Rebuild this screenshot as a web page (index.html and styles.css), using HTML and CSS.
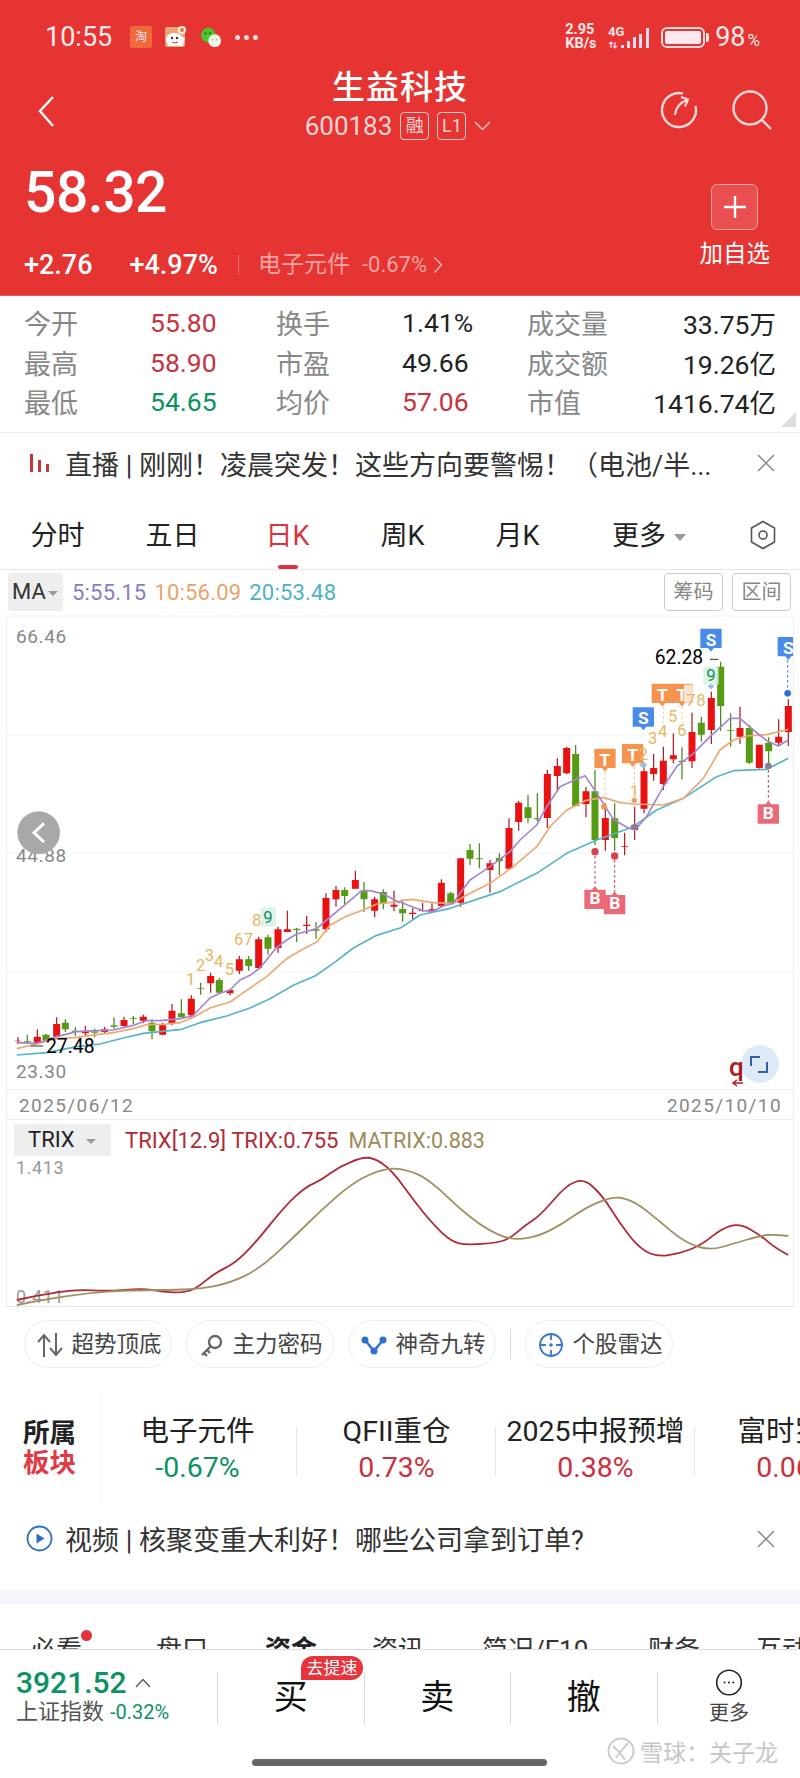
FILE: index.html
```html
<!DOCTYPE html>
<html>
<head>
    <meta charset="utf-8">
    <title>生益科技</title>
    <link rel="stylesheet" href="styles.css">
</head>
<body>
<div class="page">

    <!-- red quote header -->
    <header class="header">
        <div class="statusbar">
            <span class="clock">10:55</span>
            <span class="app-icon app-taobao">淘</span>
            <svg class="app-icon" viewBox="0 0 22 22">
                <rect x="0" y="1" width="20" height="20" rx="2" fill="#e9a77c"/>
                <path d="M1 14c0-5 4-7 8-7s7 2 8 4l3 1-2 8H3z" fill="#fff"/>
                <circle cx="7" cy="12" r="1.2" fill="#333"/><circle cx="12" cy="12" r="1.2" fill="#333"/>
                <path d="M7 16q3 2 6 0" stroke="#c33" fill="none"/>
                <circle cx="17" cy="4" r="4" fill="#f6efe0"/><circle cx="17" cy="4" r="2" fill="#e8772e"/>
            </svg>
            <svg class="app-icon app-wechat" viewBox="0 0 24 22">
                <circle cx="9" cy="9" r="8" fill="#4fc32e"/>
                <circle cx="6" cy="7" r="1.1" fill="#1d6e10"/><circle cx="11" cy="7" r="1.1" fill="#1d6e10"/>
                <circle cx="16" cy="15" r="7" fill="#eef7ea"/>
                <circle cx="14" cy="14" r=".9" fill="#7ab56b"/><circle cx="18" cy="14" r=".9" fill="#7ab56b"/>
            </svg>
            <span class="status-dots"><i></i><i></i><i></i></span>
            <span class="status-right">
                <span class="netspeed">2.95<br>KB/s</span>
                <svg class="signal" width="44" height="24" viewBox="0 0 44 24">
                    <text class="signal-text" x="0" y="11">4G</text>
                    <path d="M3 17v6M1 19l2-2 2 2M7 23v-6M5 21l2 2 2-2" stroke="#fde" fill="none" stroke-width="1.2"/>
                    <path d="M13 20h3v3h-3zM19 16h3v7h-3zM25 12h3v11h-3zM31 9h3v14h-3zM38 3h3v20h-3z" fill="#fde"/>
                </svg>
                <span class="battery"><i></i></span>
                <span class="battery-pct">98<small>%</small></span>
            </span>
        </div>

        <div class="nav">
            <svg class="nav-back" width="18" height="32" viewBox="0 0 18 32"><path d="M16 2 3 16l13 15" fill="none" stroke="#fff" stroke-width="2.4"/></svg>
            <div class="nav-title">
                <div class="stock-name">生益科技</div>
                <div class="stock-code">
                    <span>600183</span>
                    <span class="code-tag">融</span>
                    <span class="code-tag">L1</span>
                    <svg width="17" height="10" viewBox="0 0 17 10"><path d="m1 1 7.500 7.500L16 1" fill="none" stroke="#f8c4c4" stroke-width="1.500"/></svg>
                </div>
            </div>
            <svg class="nav-refresh" width="40" height="40" viewBox="0 0 40 40">
                <path d="M24 3.500A17 17 0 1 0 36.500 16" fill="none" stroke="#fbd6d6" stroke-width="2.400"/>
                <path d="M16 25q1-11 12-15M22 7l7 2.500-3 7" fill="none" stroke="#fbd6d6" stroke-width="2.200"/>
            </svg>
            <svg class="nav-search" width="42" height="42" viewBox="0 0 42 42">
                <circle cx="19" cy="19" r="16.500" fill="none" stroke="#fbd6d6" stroke-width="2.400"/>
                <path d="m31 31 9 9" stroke="#fbd6d6" stroke-width="2.400"/>
            </svg>
        </div>

        <div class="quote">
            <div class="quote-main">
                <div class="price">58.32</div>
                <div class="change">
                    <span>+2.76</span>
                    <span class="change-pct">+4.97%</span>
                    <span class="change-sep"></span>
                    <span class="change-sector">电子元件</span>
                    <span class="change-sector-pct">-0.67%</span>
                    <svg width="10" height="18" viewBox="0 0 10 18"><path d="m1.500 1.500 7 7.500-7 7.500" fill="none" stroke="#fbb" stroke-width="1.300"/></svg>
                </div>
            </div>
            <div class="watch">
                <div class="watch-btn"><svg width="24" height="24" viewBox="0 0 24 24"><path d="M12 1v22M1 12h22" stroke="#fff" stroke-width="2.400"/></svg></div>
                <div class="watch-label">加自选</div>
            </div>
        </div>
    </header>

    <!-- day stats -->
    <section class="stats">
        <span class="stat-label">今开</span><span class="stat-val up">55.80</span>
        <span class="stat-label">换手</span><span class="stat-val">1.41%</span>
        <span class="stat-label">成交量</span><span class="stat-val end">33.75万</span>
        <span class="stat-label">最高</span><span class="stat-val up">58.90</span>
        <span class="stat-label">市盈</span><span class="stat-val">49.66</span>
        <span class="stat-label">成交额</span><span class="stat-val end">19.26亿</span>
        <span class="stat-label">最低</span><span class="stat-val down">54.65</span>
        <span class="stat-label">均价</span><span class="stat-val up">57.06</span>
        <span class="stat-label">市值</span><span class="stat-val end">1416.74亿</span>
        <i class="stats-corner"></i>
    </section>

    <div class="news news-live">
        <svg width="21" height="20" viewBox="0 0 21 20"><path d="M1 1h3v18H1zM9 7h3v12H9zM17 11h3v8h-3z" fill="#c9343f"/></svg>
        <span class="news-text">直播 | 刚刚！凌晨突发！这些方向要警惕！（电池/半...</span>
        <svg class="news-close" width="20" height="20" viewBox="0 0 20 20"><path d="m2 2 16 16M18 2 2 18" stroke="#888" stroke-width="1.500"/></svg>
    </div>

    <nav class="periods">
        <span class="period">分时</span>
        <span class="period">五日</span>
        <span class="period active">日K</span>
        <span class="period">周K</span>
        <span class="period">月K</span>
        <span class="period period-more">更多<i class="caret"></i></span>
        <svg class="period-cog" width="26" height="30" viewBox="0 0 26 30">
            <path d="M13 1.500 24.500 8v14L13 28.500 1.500 22V8z" fill="none" stroke="#555" stroke-width="1.600"/>
            <circle cx="13" cy="15" r="4" fill="none" stroke="#555" stroke-width="1.600"/>
        </svg>
    </nav>

    <div class="ma-row">
        <span class="ind-chip ma-chip">MA<i class="caret"></i></span>
        <span class="ma ma5">5:55.15</span>
        <span class="ma ma10">10:56.09</span>
        <span class="ma ma20">20:53.48</span>
        <span class="ma-btn ma-btn-first">筹码</span>
        <span class="ma-btn">区间</span>
    </div>

    <!-- k line chart + trix -->
    <div class="chart-frame">
        <svg class="kline" width="788" height="474" viewBox="6 615 788 474">
            <defs>
                <path id="tag-down" d="M-30-32H30V22H8L0 32-8 22H-30Z"/>
                <path id="tag-up" d="M-30 32H30V-22H8L0-32-8-22H-30Z"/>
            </defs>
            <path class="grid" d="M6 616H794M6 735H794M6 853H794M6 972H794"/>
            <text class="axis" x="16" y="643">66.46</text>
            <text class="axis" x="16" y="862">44.88</text>
            <text class="axis" x="16" y="1078">23.30</text>

            <!-- first half, x and y in 3x units -->
            <g transform="translate(0 800) scale(.33333)">
                <path class="wick-up" d="M54 712V732M112 688V730M170 652V710M256 678V710M314 680V700M372 650V680M430 644V670M488 668V706M516 612V676M574 586V656M632 518V578M690 566V586M718 468V522M776 410V508M834 380V458M862 332V396M920 348V402M978 280V396M1008 258V320M1066 212V266M1124 290V352M1182 272V334"/>
                <path class="wick-down" d="M82 704V730M138 702V722M196 658V696M226 682V708M284 686V712M342 652V686M400 648V672M456 658V718M544 598V652M602 548V584M658 534V580M746 468V512M804 404V464M890 384V426M948 366V416M1034 262V312M1092 246V336M1150 268V328"/>
                <path class="body-up" d="M54 722V724M112 710V728M170 672V710M256 694V700M314 688V696M372 660V678M430 650V662M488 676V704M516 632V672M574 596V646M632 528V550M690 570V580M718 478V512M776 418V504M834 388V444M862 388V396M920 374V378M978 294V388M1008 270V298M1066 240V266M1124 298V332M1182 314V320"/>
                <path class="body-down" d="M82 724V726M138 704V720M196 668V688M226 692V696M284 694V698M342 676V680M400 654V656M456 668V694M544 640V652M602 564V566M658 540V578M746 478V498M804 412V446M890 386V390M948 388V392M1034 270V288M1092 274V298M1150 276V310"/>
                <polyline class="ma20-line" points="50,765 140,758 230,740 300,732 370,714 430,700 545,688 600,668 680,648 750,624 810,596 880,556 945,528 1000,490 1060,444 1130,406 1200,384"/>
                <polyline class="ma10-line" points="50,746 110,732 170,716 230,712 290,704 340,698 400,686 440,674 500,672 540,668 580,652 630,624 690,606 730,578 800,530 860,476 900,452 950,426 990,376 1040,348 1090,330 1130,312 1200,304"/>
                <polyline class="ma5-line" points="50,728 110,730 170,710 230,695 290,692 340,690 400,676 440,662 480,662 540,656 578,648 630,594 660,580 690,570 720,540 750,526 780,504 830,442 860,420 890,402 950,386 980,360 1040,310 1085,272 1110,272 1150,282 1200,308"/>
                <rect class="nine-bg" x="782" y="322" width="46" height="58"/>
                <text class="num" x="572" y="556">1</text>
                <text class="num" x="602" y="514">2</text>
                <text class="num" x="628" y="482">3</text>
                <text class="num" x="656" y="500">4</text>
                <text class="num" x="688" y="526">5</text>
                <text class="num" x="716" y="436">6</text>
                <text class="num" x="745" y="436">7</text>
                <text class="num" x="770" y="378">8</text>
                <text class="num-nine" x="804" y="368">9</text>
                <path class="low-dash" d="M92 738H130"/>
                <text class="extreme" x="138" y="758">27.48</text>
                <circle class="back-btn" cx="116" cy="98" r="64"/>
                <path class="back-arrow" d="M132 70 102 98l30 28"/>
            </g>

            <!-- second half -->
            <g transform="translate(400 610) scale(.33333)">
                <path class="wick-up" d="M38 895V930M68 878V905M96 880V905M124 808V890M182 745V890M270 750V848M327 625V778M356 572V662M442 480V654M472 445V542M500 410V492M558 530V622M616 580V722M674 668V736M704 590V690M732 466V610M761 432V512M790 410V540M820 370V460M876 308V474M934 245V402M1020 290V402M1078 404V476M1136 328V408M1165 268V408"/>
                <path class="wick-down" d="M8 870V935M152 845V880M210 702V765M238 700V775M298 730V795M384 555V640M412 550V634M527 405V590M585 480V705M644 580V722M846 412V508M904 320V395M962 155V362M992 310V410M1048 345V462M1106 382V470"/>
                <path class="body-up" d="M38 908V912M68 900V903M96 898V905M124 818V888M182 745V878M270 760V780M327 654V776M356 578V636M442 492V624M472 468V498M500 414V490M558 544V582M616 624V690M674 708V710M704 645V660M732 484V596M761 474V492M790 452V522M820 436V448M876 366V454M934 264V360M1020 354V380M1078 404V474M1136 380V398M1165 288V366"/>
                <path class="body-down" d="M8 897V910M152 850V878M210 720V746M238 745V748M298 744V754M384 592V624M412 625V628M527 432V588M585 544V690M644 625V684M846 452V456M904 338V374M962 170V288M992 360V362M1048 354V458M1106 398V424"/>
                <polyline class="ma20-line" points="0,955 60,915 150,895 300,845 410,790 500,730 590,690 700,650 770,600 850,565 950,500 1000,482 1100,478 1165,445"/>
                <polyline class="ma10-line" points="0,872 35,868 100,878 160,880 200,855 270,820 340,770 410,710 450,650 500,600 555,572 610,562 660,578 700,582 790,585 850,565 910,505 960,420 1000,390 1040,378 1100,374 1165,358"/>
                <polyline class="ma5-line" points="0,876 40,892 70,902 100,904 130,888 160,880 180,850 210,810 240,790 270,770 330,725 360,690 410,645 440,590 480,530 510,516 555,497 600,565 640,628 680,652 705,660 740,620 790,530 830,470 880,430 930,380 990,325 1020,325 1060,360 1100,392 1135,408 1165,390"/>

                <path class="dash-red" d="M585 738V828M644 750V845M1105 480V572"/>
                <path class="dash-blue" d="M1163 150V240"/>
                <path class="dash-orange" d="M615 487V578M703 470V560M790 290V340M846 290V340"/>
                <circle class="dot-red" cx="585" cy="725" r="11"/>
                <circle class="dot-red" cx="644" cy="738" r="11"/>
                <circle class="dot-orange" cx="612" cy="590" r="9"/>
                <circle class="dot-orange" cx="703" cy="571" r="8"/>
                <circle class="dot-blue" cx="1163" cy="250" r="10"/>
                <circle class="dot-mauve" cx="1105" cy="468" r="10"/>
                <circle class="dot-mauve" cx="704" cy="650" r="9"/>
                <path class="diamond" d="M730 454l12 11-12 11-12-11z"/>
                <path class="diamond" d="M933 220l10 9-10 9-10-9z"/>

                <g class="tag tag-t" transform="translate(615 450)"><use href="#tag-down"/><text y="17">T</text></g>
                <g class="tag tag-t" transform="translate(698 436)"><use href="#tag-down"/><text y="17">T</text></g>
                <g class="tag tag-t" transform="translate(787 255)"><use href="#tag-down"/><text y="17">T</text></g>
                <g class="tag tag-t" transform="translate(846 255)"><use href="#tag-down"/><text y="17">T</text></g>
                <rect class="t-fade" x="852" y="224" width="26" height="54"/>
                <g class="tag tag-s" transform="translate(730 326)"><use href="#tag-down"/><text y="17">S</text></g>
                <g class="tag tag-s" transform="translate(933 90)"><use href="#tag-down"/><text y="17">S</text></g>
                <g class="tag tag-s" transform="translate(1165 115)"><use href="#tag-down"/><text y="17">S</text></g>
                <g class="tag tag-b" transform="translate(585 863)"><use href="#tag-up"/><text y="19">B</text></g>
                <g class="tag tag-b" transform="translate(644 879)"><use href="#tag-up"/><text y="19">B</text></g>
                <g class="tag tag-b" transform="translate(1105 607)"><use href="#tag-up"/><text y="19">B</text></g>

                <text class="num" x="703" y="560">1</text>
                <text class="num" x="730" y="450">2</text>
                <text class="num" x="758" y="402">3</text>
                <text class="num" x="788" y="382">4</text>
                <text class="num" x="818" y="337">5</text>
                <text class="num" x="846" y="378">6</text>
                <text class="num" x="872" y="287">7</text>
                <text class="num" x="903" y="287">8</text>
                <rect class="nine-bg" x="910" y="170" width="46" height="54"/>
                <text class="num-nine" x="933" y="212">9</text>
                <text class="extreme" x="764" y="163">62.28</text>
                <path class="low-dash" d="M930 148H955"/>
            </g>

            <circle class="full-btn" cx="760" cy="1064" r="19"/>
            <path class="full-icon" d="M760 1057H751V1066M767 1062V1072H758"/>
            <text class="low-q" x="729" y="1076">q</text>
            <path class="low-arrow" d="M743 1083H733M737 1080l-4 3 4 3"/>
        </svg>

        <div class="dates"><span>2025/06/12</span><span>2025/10/10</span></div>

        <div class="trix-head">
            <span class="ind-chip trix-chip">TRIX<i class="caret"></i></span>
            <span class="trix-a">TRIX[12.9] TRIX:0.755</span>
            <span class="trix-b">MATRIX:0.883</span>
        </div>
        <svg class="trix" width="788" height="151" viewBox="6 1156 788 151">
            <text class="axis axis-trix" x="16" y="1174">1.413</text>
            <text class="axis axis-trix" x="16" y="1303">0.411</text>
            <g transform="translate(0 1100) scale(.5102 .33333)">
                <path class="trix-line-a" d="M33 600L57 592Q80 585 115 576.500Q150 568 180 571Q210 574 245 569.500Q280 565 300 570.500Q320 576 340 577Q360 578 372.500 571.500Q385 565 402.500 542.500Q420 520 440 505Q460 490 480 460Q500 430 530 372.500Q560 315 580 287.500Q600 260 615 250Q630 240 647.500 220Q665 200 687.500 186.500Q710 170 725 174Q740 178 755 197.500Q770 215 790 257.500Q810 300 830 337.500Q850 375 867.500 400Q885 425 900 430Q915 435 945 431.500Q975 428 987.500 421.500Q1000 415 1015 395Q1030 375 1045 360Q1060 345 1085 300Q1110 255 1127.500 246Q1145 235 1162.500 261Q1180 285 1197.500 327.500Q1215 370 1232.500 405Q1250 440 1267.500 455Q1285 470 1307.500 466Q1330 462 1352.500 448.500Q1375 435 1395 410Q1415 385 1432.500 377.500Q1450 370 1470 387.500Q1490 405 1505 425Q1520 445 1545 465"/>
                <path class="trix-line-b" d="M33 615L67 605Q100 595 135 587.500Q170 580 210 575Q250 570 315 570Q380 570 415 560Q450 550 480 527.500Q510 505 540 462.500Q570 420 600 375Q630 330 660 290Q690 250 715 231Q740 212 757.500 208Q775 202 797.500 212Q820 220 840 242.500Q860 265 880 295Q900 325 925 355Q950 385 975 402.500Q1000 420 1025 416Q1050 412 1075 393.500Q1100 375 1125 347.500Q1150 320 1177.500 304Q1205 286 1225 296.500Q1245 305 1267.500 332.500Q1290 360 1315 392.500Q1340 425 1365 438.500Q1390 452 1415 441Q1440 430 1465 418.500Q1490 407 1505 405Q1520 403 1545 408"/>
            </g>
        </svg>
    </div>

    <div class="tools">
        <span class="tool">
            <svg width="26" height="26" viewBox="0 0 26 26"><path d="M7 25V4M1 10l6-7 6 7M19 1v22M13 16l6 7 6-7" fill="none" stroke="#666" stroke-width="2"/></svg>
            超势顶底
        </span>
        <span class="tool">
            <svg width="24" height="24" viewBox="0 0 24 24"><circle cx="15" cy="9" r="6" fill="none" stroke="#666" stroke-width="2.400"/><path d="M11 13 2 22M4 20l3 3M7 17l3 3" fill="none" stroke="#666" stroke-width="2.400"/></svg>
            主力密码
        </span>
        <span class="tool">
            <svg width="26" height="20" viewBox="0 0 26 20"><path d="m4 5 9 11 9-11" fill="none" stroke="#2f6fd0" stroke-width="2.400"/><circle cx="4" cy="5" r="3.500" fill="#2f6fd0"/><circle cx="22" cy="5" r="3.500" fill="#2f6fd0"/><circle cx="13" cy="16" r="3.500" fill="#2f6fd0"/></svg>
            神奇九转
        </span>
        <i class="tool-sep"></i>
        <span class="tool">
            <svg width="26" height="26" viewBox="0 0 26 26"><circle cx="13" cy="13" r="11" fill="none" stroke="#3c78c8" stroke-width="1.800"/><path d="M13 1v7M13 18v7M1 13h7M18 13h7" stroke="#3c78c8" stroke-width="1.800"/><circle cx="13" cy="13" r="1.800" fill="#3c78c8"/></svg>
            个股雷达
        </span>
    </div>

    <section class="sectors">
        <div class="sector-head"><b>所属</b><b class="up-bright">板块</b></div>
        <div class="sector-item"><div class="sector-name">电子元件</div><div class="sector-pct down">-0.67%</div></div>
        <div class="sector-item"><div class="sector-name">QFII重仓</div><div class="sector-pct up">0.73%</div></div>
        <div class="sector-item"><div class="sector-name">2025中报预增</div><div class="sector-pct up">0.38%</div></div>
        <div class="sector-item"><div class="sector-name">富时罗素</div><div class="sector-pct up">0.06%</div></div>
    </section>

    <div class="news news-video">
        <svg width="27" height="27" viewBox="0 0 27 27"><circle cx="13.500" cy="13.500" r="12" fill="none" stroke="#2a6fc0" stroke-width="1.800"/><path d="M10.500 8.500 18.500 13.500 10.500 18.500z" fill="#2a6fc0"/></svg>
        <span class="news-text">视频 | 核聚变重大利好！哪些公司拿到订单?</span>
        <svg class="news-close" width="20" height="20" viewBox="0 0 20 20"><path d="m2 2 16 16M18 2 2 18" stroke="#888" stroke-width="1.500"/></svg>
    </div>

    <div class="band"></div>

    <div class="detail-tabs">
        <span class="detail-tab tab-must">必看<i class="tab-dot"></i></span>
        <span class="detail-tab tab-pan">盘口</span>
        <span class="detail-tab tab-fund">资金</span>
        <span class="detail-tab tab-info">资讯</span>
        <span class="detail-tab tab-f10">简况/F10</span>
        <span class="detail-tab tab-fin">财务</span>
        <span class="detail-tab tab-talk">互动</span>
    </div>

    <footer class="bar">
        <div class="bar-row">
            <div class="index">
                <div class="index-val">3921.52<svg width="16" height="10" viewBox="0 0 16 10"><path d="m1 9 7-7.500L15 9" fill="none" stroke="#555" stroke-width="1.300"/></svg></div>
                <div class="index-sub"><span>上证指数</span><span class="index-pct">-0.32%</span></div>
            </div>
            <div class="action action-buy">买<span class="badge">去提速</span></div>
            <div class="action">卖</div>
            <div class="action">撤</div>
            <div class="action action-more">
                <svg width="34" height="34" viewBox="0 0 34 34"><circle cx="17" cy="17" r="15.500" fill="none" stroke="#222" stroke-width="2"/><circle cx="11.500" cy="17" r="1.300" fill="#222"/><circle cx="17" cy="17" r="1.300" fill="#222"/><circle cx="22.500" cy="17" r="1.300" fill="#222"/></svg>
                <span>更多</span>
            </div>
        </div>
        <div class="home-bar"></div>
        <div class="watermark">
            <svg width="28" height="28" viewBox="0 0 28 28"><circle cx="14" cy="14" r="12.500" fill="none" stroke="#ccc" stroke-width="2"/><path d="m6 9 8 8 4 6M21 6l-7 8-5 7" fill="none" stroke="#ccc" stroke-width="2"/></svg>
            <span>雪球：关子龙</span>
        </div>
    </footer>
</div>
</body>
</html>
```

FILE: styles.css
```css
* {
    box-sizing: border-box;
}

body {
    margin: 0;
    background: #fff;
    font-family: Roboto, "Noto Sans CJK SC", sans-serif;
    color: #222;
}

.page {
    width: 800px;
    height: 1778px;
    overflow: hidden;
}

i {
    font-style: normal;
}

/* header */
.header {
    height: 296px;
    background: #e63432;
    border-bottom: 1px solid #d9605f;
    color: #fff;
}

.statusbar {
    height: 70px;
    padding: 4px 40px 0 45px;
    display: flex;
    align-items: center;
}

.clock {
    font-size: 27px;
    width: 85px;
    color: #fdeaea;
}

.app-icon {
    width: 22px;
    height: 22px;
    margin-right: 13px;
}

.app-taobao {
    background: #ee6a38;
    border-radius: 2px;
    font-size: 12px;
    line-height: 22px;
    text-align: center;
    color: #fde;
}

.status-dots {
    display: flex;
    gap: 4px;
}

.status-dots i {
    width: 5px;
    height: 5px;
    border-radius: 50%;
    background: #fbdede;
}

.status-right {
    margin-left: auto;
    display: flex;
    align-items: center;
}

.netspeed {
    font-size: 14.500px;
    line-height: 14px;
    font-weight: 700;
    width: 43px;
    color: #fde6e6;
}

.signal {
    overflow: visible;
}

.signal-text {
    font: 700 13px Roboto, sans-serif;
    fill: #fde6e6;
}

.battery {
    margin-left: 9px;
    width: 44px;
    height: 21px;
    border: 2px solid #f8dcdc;
    border-radius: 6px;
    padding: 2px;
    position: relative;
}

.battery i {
    display: block;
    height: 100%;
    background: #fce8ee;
    border-radius: 2px;
}

.battery::after {
    content: "";
    position: absolute;
    right: -6px;
    top: 4px;
    width: 3px;
    height: 9px;
    background: #fde6e6;
    border-radius: 0 2px 2px 0;
}

.battery-pct {
    margin-left: 10px;
    font-size: 27px;
    color: #fdeaea;
}

.battery-pct small {
    font-size: 17px;
    margin-left: 2px;
}

.nav {
    height: 70px;
    position: relative;
    display: flex;
    align-items: flex-start;
    padding-left: 37px;
}

.nav-back {
    margin-top: 25px;
}

.nav-title {
    position: absolute;
    left: 0;
    right: 0;
    top: 1px;
    text-align: center;
}

.stock-name {
    font-size: 33px;
    line-height: 34px;
    font-weight: 500;
    letter-spacing: 1px;
}

.stock-code {
    display: flex;
    justify-content: center;
    align-items: center;
    gap: 8px;
    margin-top: 7px;
    padding-right: 4px;
    font-size: 26px;
    line-height: 28px;
    color: #fcd4d4;
}

.code-tag {
    height: 28px;
    width: 29px;
    font-size: 18px;
    line-height: 26px;
    border: 1px solid #fbcaca;
    border-radius: 4px;
    text-align: center;
}

.nav-refresh {
    position: absolute;
    left: 659px;
    top: 20px;
}

.nav-search {
    position: absolute;
    left: 731px;
    top: 19px;
}

.quote {
    display: flex;
    justify-content: space-between;
    padding: 0 30px 0 24px;
}

.price {
    font-size: 57px;
    line-height: 60px;
    font-weight: 500;
    letter-spacing: -.5px;
    margin-top: 23px;
}

.change {
    margin-top: 27px;
    display: flex;
    align-items: center;
    font-size: 27px;
    line-height: 30px;
    font-weight: 500;
}

.change-pct {
    margin-left: 37px;
}

.change-sep {
    width: 1px;
    height: 20px;
    margin: 0 19px 0 20px;
    background: #ee6c6a;
}

.change-sector {
    font-size: 23px;
    font-weight: 400;
    color: #f9a3a3;
}

.change-sector-pct {
    font-size: 22px;
    font-weight: 400;
    color: #f9a3a3;
    margin: 0 6px 0 12px;
}

.watch {
    text-align: center;
    margin-top: 44px;
}

.watch-btn {
    width: 47px;
    height: 46px;
    margin: 0 auto;
    background: #e94f50;
    border: 1px solid #f3a0a0;
    border-radius: 6px;
    display: flex;
    align-items: center;
    justify-content: center;
}

.watch-label {
    font-size: 23.500px;
    line-height: 30px;
    margin-top: 9px;
    white-space: nowrap;
}

/* stats */
.stats {
    height: 137px;
    padding: 7px 24px 0 24px;
    border-bottom: 1px solid #eee;
    display: grid;
    grid-template-columns: 126px 126px 126px 125px 1fr 95px;
    grid-auto-rows: 39.5px;
    align-items: center;
    position: relative;
    font-size: 26.500px;
}

.stat-label {
    color: #888;
    font-size: 27px;
}

.stat-val.end {
    text-align: right;
    justify-self: end;
    white-space: nowrap;
}

.up {
    color: #c8323f;
}

.down {
    color: #0d9264;
}

.stats-corner {
    position: absolute;
    right: 4px;
    bottom: 5px;
    border-style: solid;
    border-width: 0 0 15px 15px;
    border-color: transparent transparent #ddd transparent;
}

/* news rows */
.news {
    display: flex;
    align-items: center;
    font-size: 27px;
    color: #333;
    position: relative;
}

.news-live {
    height: 60px;
    margin-bottom: 2px;
    padding-left: 29px;
}

.news-live .news-text {
    margin-left: 15px;
}

.news-video {
    height: 85px;
    padding: 0 0 18px 26px;
}

.news-video .news-text {
    margin-left: 12px;
}

.news-close {
    position: absolute;
    left: 756px;
    top: 50%;
    margin-top: -10px;
}

.news-video .news-close {
    margin-top: -19px;
}

/* period tabs */
.periods {
    height: 75px;
    padding-top: 3px;
    display: flex;
    align-items: center;
    border-bottom: 1px solid #e8e8e8;
    font-size: 27px;
}

.period {
    width: 115px;
    text-align: center;
    position: relative;
    color: #222;
}

.period.active {
    color: #d8333f;
}

.period.active::after {
    content: "";
    position: absolute;
    left: 48px;
    bottom: -16px;
    width: 20px;
    height: 4px;
    border-radius: 2px;
    background: #d8333f;
}

.period-more {
    width: 148px;
}

.caret {
    display: inline-block;
    width: 0;
    height: 0;
    margin-left: 8px;
    vertical-align: middle;
    border-style: solid;
    border-width: 7px 6px 0 6px;
    border-color: #999 transparent transparent transparent;
}

.period-cog {
    margin-left: 27px;
    margin-top: 2px;
}

/* MA row */
.ma-row {
    height: 45px;
    padding: 3px 9px 4px 8px;
    display: flex;
    align-items: center;
    font-size: 22px;
}

.ind-chip {
    background: #eee;
    border-radius: 3px;
    color: #333;
}

.ma-chip {
    width: 55px;
    height: 38px;
    line-height: 38px;
    padding-left: 4px;
    margin-right: 9px;
    white-space: nowrap;
}

.ma-chip .caret {
    margin-left: 2px;
    border-width: 5px 5px 0 5px;
}

.ma {
    margin-right: 8px;
    letter-spacing: .2px;
}

.ma5 {
    color: #8a7cc4;
}

.ma10 {
    color: #e8a46c;
}

.ma20 {
    color: #4fb0cc;
}

.ma-btn {
    width: 59px;
    height: 38px;
    margin-left: 9px;
    border: 1px solid #ccc;
    border-radius: 4px;
    font-size: 20px;
    line-height: 36px;
    text-align: center;
    color: #888;
}

.ma-btn-first {
    margin-left: auto;
}

/* chart */
.chart-frame {
    margin-left: 6px;
    width: 788px;
    height: 692px;
    border-left: 1px solid #eee;
    border-right: 1px solid #eee;
    border-bottom: 1px solid #e6e6e6;
    overflow: hidden;
}

.chart-frame svg {
    display: block;
    margin-left: -1px;
}

.grid {
    fill: none;
    stroke: #f4f4f4;
    stroke-width: 1;
}

.axis {
    font-size: 19px;
    letter-spacing: .6px;
    fill: #888;
}

.axis-trix {
    font-size: 18px;
    fill: #999;
}

.wick-up,
.wick-down,
.body-up,
.body-down,
polyline {
    fill: none;
}

polyline {
    stroke-linejoin: round;
}

.wick-up {
    stroke: #a5121c;
    stroke-width: 3.500;
}

.wick-down {
    stroke: #3f7f12;
    stroke-width: 3.500;
}

.body-up {
    stroke: #e81212;
    stroke-width: 21;
}

.body-down {
    stroke: #559b14;
    stroke-width: 21;
}

.ma5-line {
    stroke: #a585cf;
    stroke-width: 5;
}

.ma10-line {
    stroke: #eea873;
    stroke-width: 5;
}

.ma20-line {
    stroke: #56b3ca;
    stroke-width: 5;
}

.num {
    font-size: 50px;
    text-anchor: middle;
    fill: #e7b765;
}

.num-nine {
    font-size: 50px;
    text-anchor: middle;
    fill: #0e8f62;
}

.nine-bg {
    fill: #d7f0e4;
    opacity: .8;
}

.extreme {
    font-size: 58px;
    fill: #000;
}

.low-dash {
    stroke: #333;
    stroke-width: 3;
}

.back-btn {
    fill: #a8a8a8;
}

.back-arrow {
    fill: none;
    stroke: #fff;
    stroke-width: 9;
}

.dash-red,
.dash-blue,
.dash-orange {
    fill: none;
    stroke-width: 3;
    stroke-dasharray: 8 7;
}

.dash-red {
    stroke: #b9374a;
}

.dash-blue {
    stroke: #4a80d8;
}

.dash-orange {
    stroke: #e4c79a;
}

.dot-red {
    fill: #d8404f;
}

.dot-orange {
    fill: #ee9a55;
}

.dot-blue {
    fill: #2f6fd8;
}

.dot-mauve {
    fill: #8b7a9c;
}

.diamond {
    fill: #9dbede;
}

.tag text {
    font-size: 52px;
    font-weight: 700;
    text-anchor: middle;
    fill: #fff;
    stroke: none;
}

.tag-s {
    fill: #4a8bea;
    stroke: #4a8bea;
}

.tag-t {
    fill: #f6934f;
    stroke: #f6934f;
}

.tag-b {
    fill: #eb6a78;
    stroke: #eb6a78;
}

.tag use {
    stroke-width: 4;
    stroke-linejoin: round;
}

.t-fade {
    fill: #fbe3d2;
}

.low-q {
    font-size: 26px;
    font-weight: 500;
    fill: #b01822;
}

.low-arrow {
    fill: none;
    stroke: #b01822;
    stroke-width: 1.500;
}

.full-btn {
    fill: #dfeaf8;
}

.full-icon {
    fill: none;
    stroke: #2d62a8;
    stroke-width: 2;
}

.dates {
    height: 31px;
    padding: 2px 11px 0 12px;
    border-top: 1px solid #eee;
    border-bottom: 1px solid #eee;
    display: flex;
    justify-content: space-between;
    align-items: center;
    font-size: 19px;
    letter-spacing: 1.400px;
    color: #888;
}

.trix-head {
    height: 36px;
    padding: 4px 0 0 7px;
    display: flex;
    align-items: center;
    font-size: 22px;
}

.trix-chip {
    width: 97px;
    height: 32px;
    line-height: 32px;
    padding-left: 14px;
    margin-right: 14px;
    color: #222;
}

.trix-chip .caret {
    margin-left: 11px;
    border-width: 5px 5px 0 5px;
}

.trix-a {
    color: #b02a35;
    margin-right: 10px;
}

.trix-b {
    color: #9c8a5a;
    font-size: 21.500px;
}

.trix-line-a,
.trix-line-b {
    fill: none;
    stroke-width: 1.800;
    vector-effect: non-scaling-stroke;
}

.trix-line-a {
    stroke: #b02a35;
}

.trix-line-b {
    stroke: #a08f63;
}

/* tool chips */
.tools {
    margin-top: 13px;
    padding-left: 24px;
    display: flex;
    align-items: center;
    gap: 14px;
}

.tool {
    width: 148px;
    height: 48px;
    padding: 0 0 5px 3px;
    border: 1px solid #eee;
    border-radius: 24px;
    display: flex;
    align-items: center;
    justify-content: center;
    gap: 8px;
    font-size: 22.500px;
    color: #444;
}

.tool svg {
    margin-top: 6px;
}

.tool-sep {
    width: 1px;
    height: 30px;
    background: #ddd;
}

/* sectors */
.sectors {
    margin-top: 22px;
    height: 115px;
    display: flex;
    align-items: center;
    overflow: hidden;
}

.sector-head {
    width: 100px;
    height: 115px;
    flex: none;
    padding-left: 23px;
    display: flex;
    flex-direction: column;
    justify-content: center;
    font-size: 26.500px;
    line-height: 30px;
    box-shadow: 2px 0 4px rgba(0, 0, 0, .03);
}

.up-bright {
    color: #e03a44;
}

.sector-item {
    width: 199px;
    flex: none;
    margin-left: -2px;
    margin-right: 2px;
    position: relative;
    text-align: center;
}

.sector-item::after {
    content: "";
    position: absolute;
    right: 0;
    top: 17px;
    height: 49px;
    width: 1px;
    background: #e6e6e6;
}

.sector-name {
    font-size: 28.500px;
    line-height: 36px;
    margin-top: 4px;
    color: #222;
}

.sector-pct {
    font-size: 28.500px;
    line-height: 34px;
    margin-top: 1px;
}

.band {
    height: 15px;
    background: #f4f6f9;
}

/* detail tabs, cut by the bottom bar */
.detail-tabs {
    height: 44px;
    position: relative;
    overflow: hidden;
    font-size: 26px;
    color: #333;
}

.detail-tab {
    position: absolute;
    top: 30px;
    line-height: 30px;
    white-space: nowrap;
}

.tab-must { left: 30px; }
.tab-pan { left: 156px; }
.tab-fund { left: 265px; font-weight: 700; color: #222; }
.tab-info { left: 372px; }
.tab-f10 { left: 482px; }
.tab-fin { left: 648px; }
.tab-talk { left: 756px; }

.tab-dot {
    position: absolute;
    right: -10px;
    top: -5px;
    width: 11px;
    height: 11px;
    border-radius: 50%;
    background: #e6323c;
}

/* bottom bar */
.bar {
    height: 129px;
    border-top: 1px solid #ddd;
    position: relative;
}

.bar-row {
    display: flex;
    height: 53px;
    margin-top: 22px;
}

.index {
    width: 217px;
    padding-left: 16px;
    flex: none;
}

.index-val {
    font-size: 30px;
    line-height: 30px;
    font-weight: 500;
    color: #0d9264;
    display: flex;
    align-items: center;
    gap: 8px;
    margin-top: -4px;
}

.index-sub {
    font-size: 22px;
    line-height: 28px;
    color: #555;
    white-space: nowrap;
}

.index-pct {
    margin-left: 6px;
    font-size: 20px;
    color: #0d9264;
}

.action {
    width: 146.500px;
    flex: none;
    border-left: 1px solid #ddd;
    font-size: 34px;
    line-height: 50px;
    text-align: center;
    color: #111;
    position: relative;
}

.badge {
    position: absolute;
    left: 83px;
    top: -16px;
    width: 62px;
    height: 24px;
    background: #e8323c;
    border-radius: 12px 12px 12px 0;
    font-size: 17px;
    line-height: 24px;
    color: #fff;
}

.action-more {
    width: 144px;
    display: flex;
    flex-direction: column;
    align-items: center;
    font-size: 20px;
    line-height: 24px;
    color: #444;
}

.action-more svg {
    margin-top: -3px;
    margin-bottom: 5px;
}

.home-bar {
    position: absolute;
    left: 252px;
    bottom: 12px;
    width: 295px;
    height: 7px;
    border-radius: 4px;
    background: #666;
}

.watermark {
    position: absolute;
    left: 607px;
    top: 84px;
    display: flex;
    align-items: center;
    gap: 5px;
    font-size: 23px;
    color: #c6c6c6;
}
```
